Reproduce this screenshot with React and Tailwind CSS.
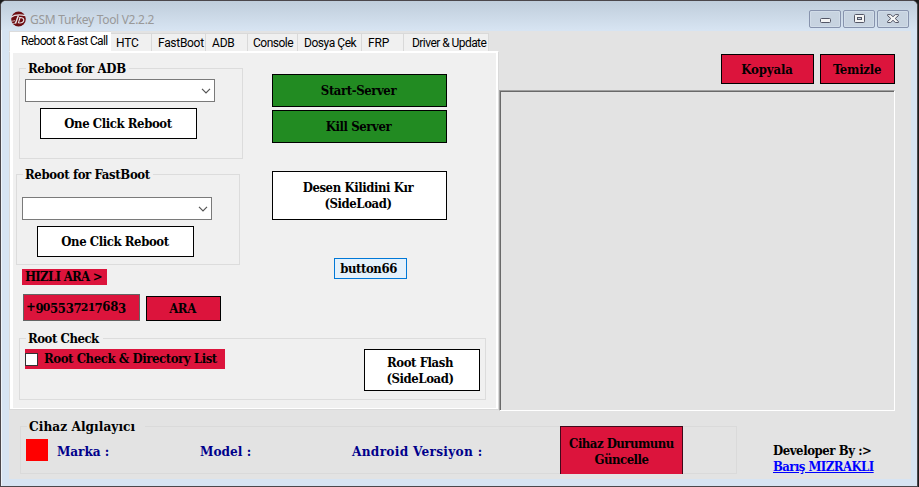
import React from "react";

const SERIF = "font-['DejaVu_Serif_Condensed','DejaVu_Serif','Liberation_Serif',serif] font-bold text-[13px] leading-[16px] tracking-[-0.42px]";

function Button({ className = "", children }) {
  return (
    <button className={`flex shrink-0 items-center justify-center border text-center whitespace-nowrap ${className}`}>
      <span>{children}</span>
    </button>
  );
}

function Group({ title, className = "", legend = "", children }) {
  return (
    <fieldset className={`shrink-0 border ${className}`}>
      <legend className={`h-[17px] whitespace-nowrap pl-[2px] ${legend}`}>{title}</legend>
      {children}
    </fieldset>
  );
}

function Combo({ className = "" }) {
  return (
    <div className={`flex h-[23px] w-[190px] items-center justify-end border border-[#7a7a7a] bg-white pr-[3px] ${className}`}>
      <svg width="10" height="6" viewBox="0 0 10 6" fill="none" stroke="#555" strokeWidth="1.2">
        <path d="M1 .8 5 4.8 9 .8" />
      </svg>
    </div>
  );
}

function Logo() {
  return (
    <svg width="15" height="16" viewBox="0 0 15 16" className="ml-[10px] mt-[7px] shrink-0">
      <ellipse cx="7.5" cy="8" rx="7.3" ry="7.6" fill="#6d0d12" />
      <path d="M0 6.2C3 4 8 3.4 14.6 4.6" stroke="#e8e4e8" strokeWidth="1.3" fill="none" />
      <path d="M7.4 4.6 4.4 12.4" stroke="#e8e4e8" strokeWidth="1.5" fill="none" />
      <path d="M9 6.8 7.4 11.8c3.6.6 5.6-1 5.4-3-.2-1.6-1.8-2.4-4.6-2.2" stroke="#e8e4e8" strokeWidth="1.1" fill="none" />
      <path d="M.4 10.4 4 9.6M1.6 13l3.6-1.4" stroke="#e8e4e8" strokeWidth=".7" />
    </svg>
  );
}

function CaptionButton({ children }) {
  return (
    <div className="flex h-[18px] w-[32px] items-center justify-center rounded-[2px] border border-[#8793ad] bg-[#c7d3e0] shadow-[inset_0_0_0_1px_#d1dce8]">
      {children}
    </div>
  );
}

function TitleBar() {
  return (
    <div className="flex h-[29px] shrink-0 bg-linear-to-b from-[#bfcddb] to-[#d7e4f2]">
      <div className="flex items-center">
        <Logo />
        <span className="ml-[4px] mt-[9px] whitespace-nowrap font-['Noto_Sans',sans-serif] text-[12px] font-normal leading-4 tracking-[-0.3px] text-[#999]">
          GSM Turkey Tool V2.2.2
        </span>
      </div>
      <div className="ml-auto mr-[8px] mt-[9px] flex gap-[2px]">
        <CaptionButton>
          <svg width="11" height="5" className="mt-[3px]">
            <rect x=".5" y=".5" width="10" height="4" rx="1" fill="#f4f4f4" stroke="#535666" />
          </svg>
        </CaptionButton>
        <CaptionButton>
          <svg width="11" height="9" className="mb-px">
            <rect x=".5" y=".5" width="10" height="8" rx="1" fill="#f4f4f4" stroke="#535666" />
            <rect x="3.5" y="3.5" width="4" height="2" fill="#c5d2e0" stroke="#535666" />
          </svg>
        </CaptionButton>
        <CaptionButton>
          <svg width="12" height="9" viewBox="0 0 12 9" className="mb-px">
            <path
              d="M.6.6H3.7L6 2.7 8.3.6H11.4V1.7L8.2 4.5 11.4 7.4V8.5H8.3L6 6.3 3.7 8.5H.6V7.4L3.8 4.5.6 1.7Z"
              fill="#f4f4f4"
              stroke="#535666"
            />
          </svg>
        </CaptionButton>
      </div>
    </div>
  );
}

const tabs = [
  ["HTC", "w-[41px] pl-[5px]"],
  ["FastBoot", "w-[54px] pl-[6px] tracking-[-0.3px]"],
  ["ADB", "w-[42px] pl-[6px]"],
  ["Console", "w-[50px] pl-[5px] tracking-[-0.5px]"],
  ["Dosya Çek", "w-[64px] pl-[6px] tracking-[-0.45px]"],
  ["FRP", "w-[42px] pl-[6px]"],
  ["Driver & Update", "w-[85px] pl-[8px] tracking-[-0.55px]"],
];

function Tabs() {
  return (
    <div className="flex h-[20px] items-end font-['Roboto',sans-serif] text-[12px] font-normal leading-[18px] tracking-[-0.2px]">
      <div className="h-[20px] w-[102px] whitespace-nowrap border-l border-t border-[#dcdcdc] bg-white pl-[11px] tracking-[-0.62px]">
        Reboot &amp; Fast Call
      </div>
      {tabs.map(([name, cls]) => (
        <div key={name} className={`h-[18px] whitespace-nowrap border-r border-t border-[#d9d9d9] bg-[#f0f0f0] ${cls}`}>
          {name}
        </div>
      ))}
    </div>
  );
}

// Old-style figures: 0-2 sit at x-height, 3 4 5 7 9 hang below the baseline.
function Figures({ value }) {
  return [...value].map((c, i) => {
    let cls = "";
    if ("012".includes(c)) cls = "text-[11px] inline-block scale-x-110";
    else if ("34579".includes(c)) cls = "relative top-[2px]";
    return <span key={i} className={cls}>{c}</span>;
  });
}

function TabPage() {
  return (
    <div className="h-[359px] w-[490px] border border-[#d9d9d9] border-t-white bg-white pb-[2px] pl-[3px] pr-[2px] pt-px">
      <div className="flex h-[355px] flex-col bg-[#f0f0f0]">
        <div className="flex">
          <div className="w-[259px] pt-[7px]">
            <Group title="Reboot for ADB" className="ml-[6px] h-[99px] w-[224px] border-[#dcdcdc]" legend="ml-[6px] w-[103px] pt-px tracking-[-0.35px]">
              <Combo className="ml-[5px] mt-[2px]" />
              <Button className="ml-[20px] mt-[6px] h-[31px] w-[157px] border-black bg-white pr-px">One Click Reboot</Button>
            </Group>
            <Group title="Reboot for FastBoot" className="ml-[3px] mt-[7px] h-[99px] w-[224px] border-[#dcdcdc]" legend="ml-[6px] w-[130px] pt-px tracking-[-0.35px]">
              <Combo className="ml-[5px] mt-[14px]" />
              <Button className="ml-[20px] mt-[6px] h-[31px] w-[157px] border-black bg-white pr-px">One Click Reboot</Button>
            </Group>
            <div className="ml-[9px] mt-[4px] h-[16px] w-[85px] whitespace-nowrap bg-[#dc143c] pl-[3px] tracking-[-0.7px]">HIZLI ARA &gt;</div>
            <div className="ml-[10px] mt-[9px] flex items-end gap-[6px]">
              <div className="h-[27px] w-[117px] whitespace-nowrap border border-[#646464] bg-[#dc143c] pl-[2px] pt-[4px] tracking-[-0.3px]">
                <Figures value="+905537217683" />
              </div>
              <Button className="h-[25px] w-[75px] border-black bg-[#dc143c] pr-[2px] pt-px">ARA</Button>
            </div>
          </div>
          <div className="flex w-[175px] flex-col pt-[21px]">
            <Button className="h-[33px] border-black bg-[#228b22] pr-[2px]">Start-Server</Button>
            <Button className="mt-[3px] h-[33px] border-black bg-[#228b22] pr-[2px]">Kill Server</Button>
            <Button className="mt-[28px] h-[49px] border-black bg-white pr-[3px]">Desen Kilidini Kır<br />(SideLoad)</Button>
            <button className="ml-[62px] mt-[38px] h-[21px] w-[73px] border border-[#0078d7] bg-[#e5f1fb] pr-[4px] pt-px">button66</button>
          </div>
        </div>
        <Group title="Root Check" className="ml-[6px] mt-[9px] h-[70px] w-[467px] border-[#dcdcdc]" legend="ml-[6px] w-[77px] pt-px tracking-[-0.45px]">
          <div className="ml-[5px] mt-[2px] flex justify-between pr-[5px]">
            <label className="flex h-[20px] w-[200px] items-center whitespace-nowrap bg-[#dc143c]">
              <span className="mr-[6px] h-[13px] w-[13px] border border-[#333] bg-white" />
              Root Check &amp; Directory List
            </label>
            <Button className="h-[42px] w-[116px] border-black bg-white pr-[4px] pt-px">Root Flash<br />(SideLoad)</Button>
          </div>
        </Group>
      </div>
    </div>
  );
}

export default function App() {
  return (
    <div className={`h-[487px] w-[919px] overflow-hidden bg-[#1b1b1b] text-black ${SERIF}`}>
      <div className="flex h-[487px] w-[918px] flex-col overflow-hidden rounded-t-[6px] border border-[#4b474b] bg-[#d7e4f2] shadow-[inset_1px_1px_0_#eef3f9]">
        <TitleBar />
        <div className="mx-[8px] mt-px flex h-[448px] w-[902px] flex-col bg-[#e3e3e3]">
          <div className="flex">
            <div className="w-[490px]">
              <Tabs />
              <TabPage />
            </div>
            <div className="w-[396px] pt-[23px]">
              <div className="flex justify-end gap-[6px]">
                <Button className="h-[30px] w-[93px] border-black bg-[#dc143c] pr-px pt-px tracking-[-0.1px]">Kopyala</Button>
                <Button className="h-[30px] w-[75px] border-black bg-[#dc143c] pr-px pt-px tracking-[-0.25px]">Temizle</Button>
              </div>
              <div className="mt-[6px] h-[321px] border-b border-l border-r border-t border-b-white border-l-[#a0a0a0] border-r-white border-t-[#a0a0a0]">
                <div className="h-[319px] border-l border-t border-[#696969]" />
              </div>
            </div>
          </div>
          <div className="mt-[7px] flex pl-[11px]">
            <div className="relative w-[717px]">
              <Group title="Cihaz Algılayıcı" className="h-[56px] w-[717px] border-[#dadada]" legend="ml-[6px] w-[118px] text-[13.5px] tracking-[0.05px]">
                <div className="mt-[4px] flex h-[22px] items-center pl-[5px] text-[13.5px] text-[#00008b]">
                  <div className="h-[22px] w-[22px] bg-[#ff0000]" />
                  <span className="ml-[9px] w-[143px] pt-px tracking-[-0.1px]">Marka :</span>
                  <span className="w-[152px] pt-px tracking-[0.02px]">Model :</span>
                  <span className="pt-px tracking-[0.3px]">Android Versiyon :</span>
                </div>
              </Group>
              <Button className="absolute left-[540px] top-[8px] h-[48px] w-[123px] border-b-0 border-[#40081a] bg-[#dc143c] pt-[2px] tracking-[-0.5px]">
                Cihaz Durumunu<br />Güncelle
              </Button>
            </div>
            <div className="ml-[36px] whitespace-nowrap pt-[25px]">
              <div>Developer By :&gt;</div>
              <a className="tracking-[-0.55px] text-[#0000ff] underline">Barış MIZRAKLI</a>
            </div>
          </div>
        </div>
      </div>
    </div>
  );
}
